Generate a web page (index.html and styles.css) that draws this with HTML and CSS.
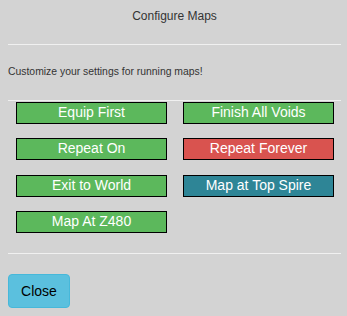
FILE: index.html
```html
<!DOCTYPE html>
<html lang="en">

<head>
    <meta charset="UTF-8">
    <title>Configure Maps</title>
    <link rel="stylesheet" href="styles.css">
</head>

<body>
    <div class="dialog">
        <!-- Header -->
        <div class="dialog-title">Configure Maps</div>
        <hr>

        <!-- Description -->
        <p class="dialog-text">Customize your settings for running maps!</p>
        <hr>

        <!-- Settings buttons -->
        <div class="setting-grid">
            <div class="setting-btn on">Equip First</div>
            <div class="setting-btn on">Finish All Voids</div>
            <div class="setting-btn on">Repeat On</div>
            <div class="setting-btn off">Repeat Forever</div>
            <div class="setting-btn on">Exit to World</div>
            <div class="setting-btn teal">Map at Top Spire</div>
            <div class="setting-btn on">Map At Z480</div>
        </div>
        <hr class="footer-rule">

        <!-- Footer -->
        <button class="close-btn">Close</button>
    </div>
</body>

</html>
```

FILE: styles.css
```css
/* Basic reset */
* {
    margin: 0;
    padding: 0;
    box-sizing: border-box;
}

body {
    font-family: "Liberation Sans", Arial, sans-serif;
    background-color: #d3d3d3;
    color: #333;
}

.dialog {
    padding: 0 6px 0 8px;
}

/* Header */
.dialog-title {
    height: 44px;
    line-height: 32px;
    text-align: center;
    font-size: 12px;
}

hr {
    border: none;
    height: 1px;
    background-color: #f0f0f0;
}

.dialog-text {
    font-size: 10.4px;
    line-height: 18px;
    margin: 18px 0 19px;
}

/* Buttons grid */
.setting-grid {
    display: grid;
    grid-template-columns: 151px 151px;
    column-gap: 16px;
    row-gap: 14.4px;
    margin: 1px 0 0 8px;
}

.setting-btn {
    height: 22px;
    line-height: 19px;
    border: 1px solid #000;
    color: #fff;
    font-size: 14px;
    text-align: center;
    cursor: pointer;
}

.setting-btn.on {
    background-color: #5cb85c;
}

.setting-btn.off {
    background-color: #d9534f;
}

.setting-btn.teal {
    background-color: #2e8596;
}

.footer-rule {
    margin-top: 20px;
}

/* Close button */
.close-btn {
    margin-top: 20px;
    width: 62px;
    height: 34px;
    background-color: #5bc0de;
    border: 1px solid #46b8da;
    border-radius: 4px;
    font-family: "Liberation Sans", Arial, sans-serif;
    font-size: 14px;
    color: #000;
    cursor: pointer;
}
```
